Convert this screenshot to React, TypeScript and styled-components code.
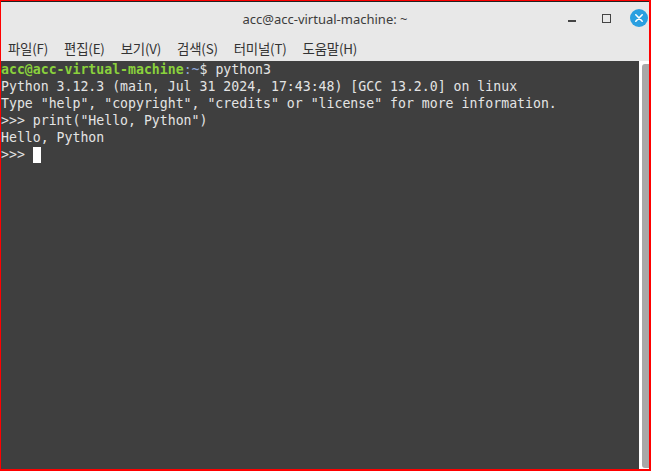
import styled, { createGlobalStyle } from "styled-components";

const GlobalStyle = createGlobalStyle`
  html, body {
    margin: 0;
    padding: 0;
    background: #ffffff;
  }
`;

const menus: string[] = ["파일(F)", "편집(E)", "보기(V)", "검색(S)", "터미널(T)", "도움말(H)"];

type Part = { text: string; tone?: "user" | "path" };
const lines: Part[][] = [
  [
    { text: "acc@acc-virtual-machine", tone: "user" },
    { text: ":~", tone: "path" },
    { text: "$ python3" },
  ],
  [{ text: "Python 3.12.3 (main, Jul 31 2024, 17:43:48) [GCC 13.2.0] on linux" }],
  [{ text: 'Type "help", "copyright", "credits" or "license" for more information.' }],
  [{ text: '>>> print("Hello, Python")' }],
  [{ text: "Hello, Python" }],
];

export default function App() {
  return (
    <>
      <GlobalStyle />
      <Window>
        <TitleBar>
          <Title>acc@acc-virtual-machine: ~</Title>
          <Controls>
            <Minimize />
            <Maximize />
            <Close>
              <svg width="18" height="18" viewBox="0 0 18 18">
                <circle cx="9" cy="9" r="9" fill="#2a9fe0" />
                <path d="M5.8 5.8 L12.2 12.2 M12.2 5.8 L5.8 12.2" stroke="#fff" strokeWidth="1.6" strokeLinecap="round" />
              </svg>
            </Close>
          </Controls>
        </TitleBar>
        <MenuBar>
          {menus.map((m) => (
            <MenuItem key={m}>{m}</MenuItem>
          ))}
        </MenuBar>
        <Body>
          <Screen>
            {lines.map((line, i) => (
              <Line key={i}>
                {line.map((p, j) => (
                  <Span key={j} $tone={p.tone}>
                    {p.text}
                  </Span>
                ))}
              </Line>
            ))}
            <Line>
              {">>> "}
              <Cursor />
            </Line>
          </Screen>
          <ScrollTrack>
            <Thumb />
          </ScrollTrack>
        </Body>
      </Window>
    </>
  );
}

const Window = styled.div`
  width: 651px;
  height: 471px;
  box-sizing: border-box;
  border-left: 1px solid #ff0000;
  border-top: 1px solid #ff0000;
  border-right: 2px solid #ff0000;
  border-bottom: 2px solid #ff0000;
  display: flex;
  flex-direction: column;
  background: #e8e8e8;
  overflow: hidden;
`;

const TitleBar = styled.div`
  height: 33px;
  flex-shrink: 0;
  position: relative;
  display: flex;
  align-items: center;
  justify-content: center;
  border-top: 1px solid #222;
`;

const Title = styled.div`
  font-family: "Noto Sans", "Open Sans", sans-serif;
  font-size: 13px;
  color: #3c3c3c;
  padding-top: 1px;
`;

const Controls = styled.div`
  position: absolute;
  right: 1px;
  top: 7px;
  display: flex;
  align-items: center;
`;

const Minimize = styled.div`
  width: 8px;
  height: 1.5px;
  background: #444;
  margin-top: 6px;
  margin-right: 26px;
`;

const Maximize = styled.div`
  width: 7px;
  height: 7px;
  border: 1px solid #444;
  margin-right: 19px;
`;

const Close = styled.div`
  width: 18px;
  height: 18px;
  display: flex;
`;

const MenuBar = styled.div`
  height: 26px;
  flex-shrink: 0;
  display: flex;
  align-items: center;
  padding-left: 7px;
  gap: 16px;
`;

const MenuItem = styled.span`
  font-family: "Noto Sans CJK KR", "Noto Sans", sans-serif;
  font-size: 13.4px;
  letter-spacing: -0.2px;
  color: #333;
`;

const Body = styled.div`
  flex: 1;
  display: flex;
  min-height: 0;
`;

const Screen = styled.div`
  flex: 1;
  background: #3f3f3f;
  padding: 0;
  font-family: "DejaVu Sans Mono", monospace;
  font-size: 13.2px;
  line-height: 17px;
  color: #e4e4e4;
`;

const Line = styled.div`
  white-space: pre;
  height: 17px;
  display: flex;
  align-items: center;
`;

const Span = styled.span<{ $tone?: "user" | "path" }>`
  white-space: pre;
  color: ${(p) => (p.$tone === "user" ? "#8ad13c" : p.$tone === "path" ? "#8ea6d6" : "#e4e4e4")};
  font-weight: ${(p) => (p.$tone === "user" ? 700 : 400)};
`;

const Cursor = styled.span`
  display: inline-block;
  width: 8px;
  height: 16px;
  background: #ffffff;
`;

const ScrollTrack = styled.div`
  width: 7px;
  background: #ffffff;
  padding: 3px 0 1px 3px;
  display: flex;
`;

const Thumb = styled.div`
  flex: 1;
  background: #a8a8a8;
  border-radius: 3px 0 0 3px;
`;
